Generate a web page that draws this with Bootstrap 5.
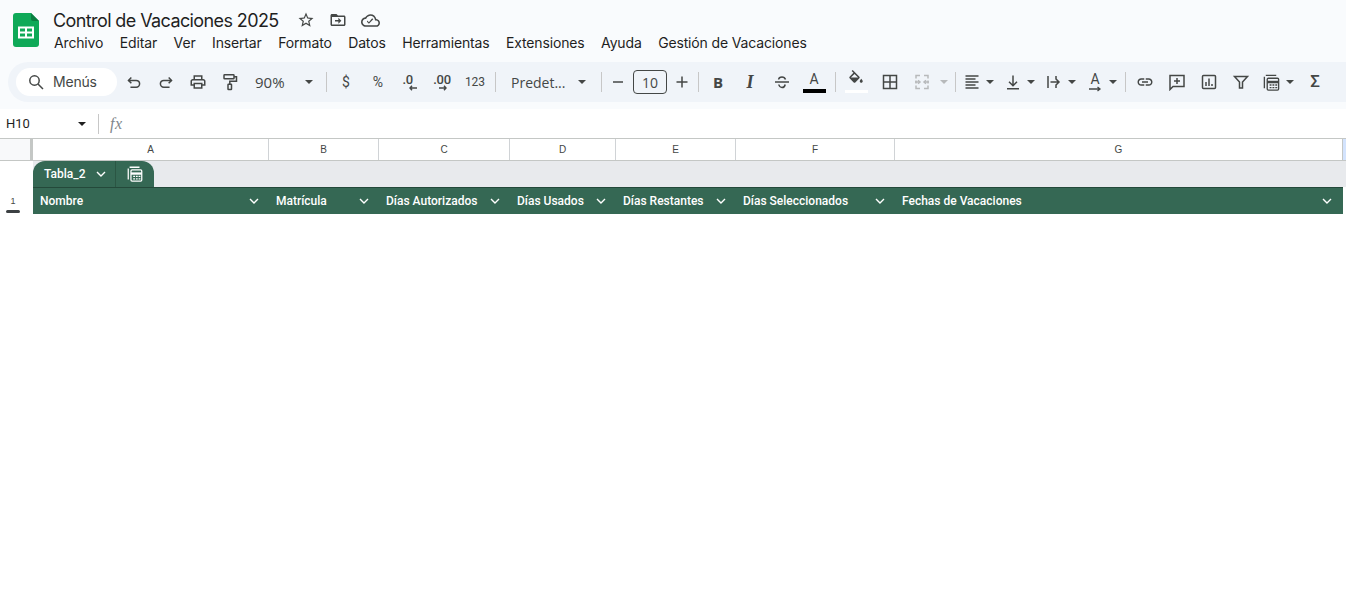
<!DOCTYPE html>
<html lang="es">
<head>
<meta charset="utf-8">
<title>Control de Vacaciones 2025</title>
<link href="https://cdn.jsdelivr.net/npm/bootstrap@5.3.0/dist/css/bootstrap.min.css" rel="stylesheet">
<style>
html,body{height:100%;margin:0;overflow:hidden;background:#fff;}
body{font-family:"Open Sans","Liberation Sans",sans-serif;color:#444746;}
svg{display:block;flex:none;}
.topband{background:#f9fbfd;height:109px;}
.titlebar{height:62px;padding:0 0 0 13px;}
.sheetlogo{width:26px;height:34px;margin-top:13px;margin-right:14px;}
.doc-title{font-size:18px;line-height:24px;color:#1f1f1f;margin-top:9px;font-family:Inter,sans-serif;letter-spacing:-.6px;white-space:nowrap;width:237px;}
.title-ico{width:32px;height:20px;margin-top:11px;color:#444746;}
.menu-row{font-size:14px;line-height:20px;color:#1f1f1f;margin-left:1px;gap:16.5px;font-family:Inter,sans-serif;letter-spacing:-.15px;white-space:nowrap;}
.tools{height:40px;margin-left:8px;padding-left:8px;background:#f0f4f9;border-radius:20px 0 0 20px;color:#444746;}
.searchpill{width:101px;height:28px;background:#fff;border-radius:14px;padding-left:12px;font-size:14px;font-family:Inter,sans-serif;letter-spacing:-.2px;color:#444746;gap:9px;margin-right:1px;}
.searchpill span{padding-bottom:2px;}
.tb{height:32px;flex:none;display:flex;align-items:center;justify-content:center;font-family:Roboto,sans-serif;color:#444746;}
.w32{width:32px;}.w30{width:30px;}.w26{width:26px;}.w24{width:24px;}.w12{width:12px;}
.gl1{margin-left:1px;}.gl2{margin-left:2px;}.gl3{margin-left:3px;}.gl5{margin-left:5px;}.gl6{margin-left:6px;}.gl9{margin-left:9px;}
.gr3{margin-right:3px;}
.caret-dn{width:0;height:0;border-left:4px solid transparent;border-right:4px solid transparent;border-top:4px solid currentColor;}
.vsep{width:1px;height:20px;background:#c7c7c7;flex:none;}
.zoomtxt{width:72px;padding-left:9px;padding-right:5px;justify-content:space-between;font-size:15px;font-family:"Open Sans",sans-serif;}
.predet{width:92px;padding-left:11px;padding-right:6px;justify-content:space-between;font-size:14px;font-family:"Open Sans",sans-serif;}
.sizebox{width:34px;height:24px;border:1px solid #444746;border-radius:4px;font-size:14px;font-family:"Open Sans",sans-serif;}
.t14{font-size:14px;}.t12{font-size:12px;}.t17{font-size:17px;}
.dec{font-size:13px;font-weight:500;line-height:12px;letter-spacing:-.3px;flex-direction:column;}
.dec svg{margin-top:-1px;}
.decl span{margin-right:4px;}.decl svg{margin-left:6px;}
.txb{font-weight:700;font-size:15px;font-family:"Open Sans",sans-serif;}
.txi{font-style:italic;font-weight:700;font-size:18px;font-family:"Liberation Serif",serif;}
.colorbtn{flex-direction:column;font-size:14px;line-height:14px;font-family:Roboto,sans-serif;}
.colorbar{width:23px;height:4px;background:#000;margin-top:3px;}
.fillbar{width:23px;height:3px;background:#fff;margin-top:2px;}
.tipped{margin-top:-2px;}
.off{color:#b7b9bb;}
.fbar{height:29px;background:#fff;font-size:13px;color:#1f1f1f;}
.namebox{width:98px;padding:0 12px 0 6px;font-family:Roboto,sans-serif;}
.fxlbl{font-family:"Liberation Serif",serif;font-style:italic;color:#80868b;font-size:16px;margin-left:11px;letter-spacing:.5px;}
.gridhead{display:grid;grid-template-columns:33px 236px 110px 131px 106px 120px 159px 448px 3px;height:23px;border-top:1px solid #c4c7c5;border-bottom:1px solid #c4c7c5;font-family:"Liberation Sans",sans-serif;font-size:10px;color:#444746;background:#fff;}
.gridhead>div{display:flex;align-items:center;justify-content:center;border-right:1px solid #d0d3d6;}
.gridhead>.corner{background:#f8f9fa;border-right:3px solid #c4c7c5;}
.gridhead>.sel{background:#d3e3fd;border:0;}
.gridhead>.lastc{border-right:1px solid #c4c7c5;}
.tabrow{height:26px;display:flex;background:#e8eaed;}
.rowgut{width:33px;background:#fff;flex:none;}
.tabshape{width:121px;background:#356854;border-radius:12px 12px 0 0;color:#fff;display:flex;align-items:center;font-family:Roboto,sans-serif;font-weight:500;font-size:12px;}
.tabname{width:83px;display:flex;align-items:center;justify-content:space-between;padding:0 8px 0 11px;border-right:1px solid #2b5644;height:100%;}
.tabico{flex:1;display:flex;justify-content:center;}
.dataline{display:grid;grid-template-columns:33px 236px 110px 131px 106px 120px 159px 448px;height:27px;font-family:Roboto,sans-serif;font-weight:500;font-size:12px;color:#fff;}
.rowno{background:#fff;color:#444746;font-size:9px;font-family:"Liberation Sans",sans-serif;font-weight:400;display:flex;flex-direction:column;align-items:center;justify-content:space-between;padding:9px 7px 1px 0;line-height:10px;}
.rowhandle{width:14px;height:3px;background:#3c4043;border-radius:2px;}
.hcell{background:#356854;border-top:1px solid #24493a;display:flex;align-items:center;justify-content:space-between;padding:0 9px 0 7px;white-space:nowrap;}
.hcell:last-child{padding-right:10px;}
</style>
</head>
<body>
<svg width="0" height="0" class="d-none"><defs>
<symbol id="chev" viewBox="0 0 12 12"><path d="M2 4l4 4 4-4" fill="none" stroke="currentColor" stroke-width="1.4"/></symbol>
<symbol id="tblico" viewBox="0 0 20 20"><path d="M4 2.500h11M2.500 4v12" fill="none" stroke="currentColor" stroke-width="1.400"/><rect x="5.500" y="5.500" width="12" height="12.500" rx="1.200" fill="none" stroke="currentColor" stroke-width="1.400"/><path d="M5.500 9.500h12" stroke="currentColor" stroke-width="2.600"/><path d="M8 12.600h2M11 12.600h2M14 12.600h2M8 15.400h2M11 15.400h2M14 15.400h2" stroke="currentColor" stroke-width="1.500"/></symbol>
</defs></svg>

<header class="topband">
  <div class="titlebar d-flex">
    <svg class="sheetlogo" viewBox="0 0 26 34"><path d="M3 0h15l8 8v23a3 3 0 0 1-3 3H3a3 3 0 0 1-3-3V3a3 3 0 0 1 3-3z" fill="#0fa958"/><path d="M18 0l8 8h-6a2 2 0 0 1-2-2z" fill="#0a7d40"/><path d="M6 14.500h14v10H6z" fill="none" stroke="#fff" stroke-width="2"/><path d="M6 19.500h14M13 14.500v10" stroke="#fff" stroke-width="2"/></svg>
    <div>
      <div class="d-flex">
        <div class="doc-title">Control de Vacaciones 2025</div>
        <div class="title-ico d-flex justify-content-center"><svg width="18" height="18" viewBox="0 0 24 24" fill="currentColor"><path d="M22 9.240l-7.190-.62L12 2 9.190 8.630 2 9.240l5.460 4.730L5.820 21 12 17.270 18.180 21l-1.630-7.030L22 9.240zM12 15.400l-3.760 2.270 1-4.280-3.320-2.880 4.380-.38L12 6.100l1.710 4.040 4.380.38-3.320 2.880 1 4.280L12 15.400z"/></svg></div>
        <div class="title-ico d-flex justify-content-center"><svg width="18" height="18" viewBox="0 0 24 24" fill="currentColor"><path d="M20 6h-8l-2-2H4c-1.100 0-2 .9-2 2v12c0 1.100.9 2 2 2h16c1.100 0 2-.9 2-2V8c0-1.100-.9-2-2-2zm0 12H4V8h16v10z"/><path d="M12.500 9l4 4-4 4v-3H8v-2h4.500z"/></svg></div>
        <div class="title-ico d-flex justify-content-center"><svg width="19" height="19" viewBox="0 0 24 24" fill="currentColor"><path d="M19.350 10.040C18.670 6.590 15.640 4 12 4 9.110 4 6.600 5.640 5.350 8.040 2.340 8.360 0 10.910 0 14c0 3.310 2.690 6 6 6h13c2.760 0 5-2.240 5-5 0-2.640-2.050-4.780-4.650-4.960zM19 18H6c-2.210 0-4-1.790-4-4 0-2.050 1.530-3.760 3.560-3.970l1.070-.11.5-.95C8.080 7.140 9.940 6 12 6c2.620 0 4.880 1.860 5.390 4.430l.3 1.500 1.530.11c1.560.1 2.780 1.410 2.780 2.960 0 1.650-1.350 3-3 3zm-9-3.820l-2.090-2.090L7.500 13.500 10 16l5.510-5.510-1.410-1.410z"/></svg></div>
      </div>
      <nav class="menu-row d-flex">
        <span>Archivo</span><span>Editar</span><span>Ver</span><span>Insertar</span><span>Formato</span><span>Datos</span><span>Herramientas</span><span>Extensiones</span><span>Ayuda</span><span>Gestión de Vacaciones</span>
      </nav>
    </div>
  </div>
  <div class="tools d-flex align-items-center">
    <div class="searchpill d-flex align-items-center"><svg width="16" height="16" viewBox="0 0 16 16" fill="none" stroke="currentColor" stroke-width="1.500"><circle cx="6.500" cy="6.500" r="4.700"/><path d="M10 10l5 5"/></svg><span>Menús</span></div>
    <div class="tb w32"><svg width="16" height="16" viewBox="0 0 18 18" fill="none" stroke="currentColor" stroke-width="1.700"><path d="M6 4L2.800 7.200 6 10.400"/><path d="M3 7.200h8.500a3.800 3.800 0 0 1 0 7.600H5"/></svg></div>
    <div class="tb w32"><svg width="16" height="16" viewBox="0 0 18 18" fill="none" stroke="currentColor" stroke-width="1.700"><path d="M12 4l3.200 3.200L12 10.400"/><path d="M15 7.200H6.500a3.800 3.800 0 0 0 0 7.600H13"/></svg></div>
    <div class="tb w32"><svg width="18" height="18" viewBox="0 0 24 24" fill="currentColor"><path d="M19 8h-1V3H6v5H5c-1.660 0-3 1.340-3 3v6h4v4h12v-4h4v-6c0-1.660-1.340-3-3-3zM8 5h8v3H8V5zm8 14H8v-4h8v4zm4-4h-2v-2H6v2H4v-4c0-.55.45-1 1-1h14c.55 0 1 .45 1 1v4z"/></svg></div>
    <div class="tb w32"><svg width="18" height="18" viewBox="0 0 18 18" fill="none" stroke="currentColor" stroke-width="1.500"><rect x="3" y="1.800" width="10" height="4" rx=".6"/><path d="M13 3.800h2.500v4.500H8.800v3"/><rect x="7" y="11.300" width="3.500" height="5.200" rx=".5"/></svg></div>
    <div class="tb zoomtxt"><span>90%</span><span class="caret-dn"></span></div>
    <span class="vsep ms-2 gr3"></span>
    <div class="tb w32 t14">$</div>
    <div class="tb w32 t14">%</div>
    <div class="tb w32"><span class="dec decl d-flex"><span>.0</span><svg width="9" height="6" viewBox="0 0 9 6" fill="none" stroke="currentColor" stroke-width="1.400"><path d="M3 .8L1 3l2 2.200M1.500 3H8"/></svg></span></div>
    <div class="tb w32"><span class="dec d-flex align-items-center"><span>.00</span><svg width="9" height="6" viewBox="0 0 9 6" fill="none" stroke="currentColor" stroke-width="1.400"><path d="M6 .8L8 3 6 5.200M1 3h6.500"/></svg></span></div>
    <div class="tb w32 t12 gl1">123</div>
    <span class="vsep ms-1 me-1"></span>
    <div class="tb predet"><span>Predet...</span><span class="caret-dn"></span></div>
    <span class="vsep gl9"></span>
    <div class="tb w30 gl1"><svg width="12" height="12" viewBox="0 0 12 12" stroke="currentColor" stroke-width="1.500"><path d="M1 6h10"/></svg></div>
    <div class="tb sizebox">10</div>
    <div class="tb w30"><svg width="12" height="12" viewBox="0 0 12 12" stroke="currentColor" stroke-width="1.500"><path d="M.5 6h11M6 .5v11"/></svg></div>
    <span class="vsep gl1"></span>
    <div class="tb w32 gl3 txb">B</div>
    <div class="tb w32 txi">I</div>
    <div class="tb w32"><svg width="18" height="18" viewBox="0 0 18 18" fill="none" stroke="currentColor" stroke-width="1.500"><path d="M2 9h14M12.500 6.500C12 5 10.500 4 9 4S5.800 5 5.600 6.500M5.800 11.500C6 13 7.500 14.500 9 14.500s2.900-1.300 3.200-3"/></svg></div>
    <div class="tb w32 colorbtn"><span>A</span><span class="colorbar"></span></div>
    <span class="vsep gl5"></span>
    <div class="tb w32 ms-1 colorbtn tipped"><svg width="18" height="18" viewBox="0 0 24 24" fill="currentColor"><path d="M16.560 8.940L7.620 0 6.210 1.410l2.380 2.380-5.150 5.150c-.59.59-.59 1.540 0 2.120l5.500 5.500c.29.29.68.44 1.060.44s.77-.15 1.060-.44l5.500-5.500c.59-.58.59-1.530 0-2.120zM5.210 10L10 5.210 14.790 10H5.210zM19 11.500s-2 2.170-2 3.500c0 1.100.9 2 2 2s2-.9 2-2c0-1.330-2-3.500-2-3.500z"/></svg><span class="fillbar"></span></div>
    <div class="tb w32 gl2"><svg width="18" height="18" viewBox="0 0 18 18" fill="none" stroke="currentColor" stroke-width="1.500"><rect x="2.500" y="2.500" width="13" height="13"/><path d="M9 2.500v13M2.500 9h13"/></svg></div>
    <div class="tb w32 off"><svg width="18" height="18" viewBox="0 0 18 18" fill="none" stroke="currentColor" stroke-width="1.500"><path d="M7 2.500H3v3M3 12.500v3h4M11 2.500h4v3M15 12.500v3h-4M3 7.500v3M15 7.500v3M2 9h3.500M5 7.200L7 9l-2 1.800M16 9h-3.500M13 7.200L11 9l2 1.800"/></svg></div>
    <div class="tb w12 off"><span class="caret-dn"></span></div>
    <span class="vsep gl5"></span>
    <div class="tb w24 ms-1"><svg width="18" height="18" viewBox="0 0 18 18" stroke="currentColor" stroke-width="1.500"><path d="M2.500 3h13M2.500 6h10M2.500 9h13M2.500 12h10M2.500 15h13"/></svg></div>
    <div class="tb w12"><span class="caret-dn"></span></div>
    <div class="tb w24 gl5"><svg width="18" height="18" viewBox="0 0 18 18" fill="none" stroke="currentColor" stroke-width="1.500"><path d="M9 2.500v10M5 8.800l4 4 4-4M3 15.700h12"/></svg></div>
    <div class="tb w12"><span class="caret-dn"></span></div>
    <div class="tb w24 gl5"><svg width="18" height="18" viewBox="0 0 18 18" fill="none" stroke="currentColor" stroke-width="1.500"><path d="M3 3v12M11 3v3.500M11 11.500V15M5.500 9H14M11 6l3 3-3 3"/></svg></div>
    <div class="tb w12"><span class="caret-dn"></span></div>
    <div class="tb w24 gl5"><span class="colorbtn d-flex align-items-center"><span>A</span><svg width="14" height="6" viewBox="0 0 14 6" fill="none" stroke="currentColor" stroke-width="1.300"><path d="M1 3h11M9.500 1L12 3 9.500 5"/></svg></span></div>
    <div class="tb w12"><span class="caret-dn"></span></div>
    <span class="vsep gl6"></span>
    <div class="tb w32 gl3"><svg width="18" height="18" viewBox="0 0 24 24" fill="currentColor"><path d="M3.900 12c0-1.710 1.390-3.100 3.100-3.100h4V7H7c-2.760 0-5 2.240-5 5s2.240 5 5 5h4v-1.900H7c-1.710 0-3.100-1.390-3.100-3.100zM8 13h8v-2H8v2zm9-6h-4v1.900h4c1.710 0 3.100 1.390 3.100 3.100s-1.390 3.100-3.100 3.100h-4V17h4c2.760 0 5-2.240 5-5s-2.240-5-5-5z"/></svg></div>
    <div class="tb w32"><svg width="18" height="18" viewBox="0 0 18 18" fill="none" stroke="currentColor" stroke-width="1.500"><path d="M2 2.500h14v11H5l-3 3zM9 5v6M6 8h6"/></svg></div>
    <div class="tb w32"><svg width="18" height="18" viewBox="0 0 18 18" fill="none" stroke="currentColor" stroke-width="1.500"><rect x="2.500" y="2.500" width="13" height="13" rx="1"/><path d="M6 13V9M9 13V5.500M12 13v-2"/></svg></div>
    <div class="tb w32"><svg width="18" height="18" viewBox="0 0 18 18" fill="none" stroke="currentColor" stroke-width="1.500"><path d="M2.500 3.500h13L10.500 9v6h-3V9z"/></svg></div>
    <div class="tb w26 gl1"><svg width="19" height="19"><use href="#tblico"/></svg></div>
    <div class="tb w12"><span class="caret-dn"></span></div>
    <div class="tb w32 gl3 t17 fw-medium">Σ</div>
  </div>
</header>

<div class="fbar d-flex align-items-center">
  <div class="namebox d-flex justify-content-between align-items-center"><span>H10</span><span class="caret-dn"></span></div>
  <span class="vsep"></span>
  <span class="fxlbl">fx</span>
</div>

<div class="gridhead">
  <div class="corner"></div><div>A</div><div>B</div><div>C</div><div>D</div><div>E</div><div>F</div><div class="lastc">G</div><div class="sel"></div>
</div>
<div class="tabrow">
  <div class="rowgut"></div>
  <div class="tabshape">
    <div class="tabname"><span>Tabla_2</span><svg width="12" height="12"><use href="#chev"/></svg></div>
    <div class="tabico"><svg width="18" height="18"><use href="#tblico"/></svg></div>
  </div>
</div>
<div class="dataline">
  <div class="rowno"><span>1</span><span class="rowhandle"></span></div>
  <div class="hcell"><span>Nombre</span><svg width="12" height="12"><use href="#chev"/></svg></div>
  <div class="hcell"><span>Matrícula</span><svg width="12" height="12"><use href="#chev"/></svg></div>
  <div class="hcell"><span>Días Autorizados</span><svg width="12" height="12"><use href="#chev"/></svg></div>
  <div class="hcell"><span>Días Usados</span><svg width="12" height="12"><use href="#chev"/></svg></div>
  <div class="hcell"><span>Días Restantes</span><svg width="12" height="12"><use href="#chev"/></svg></div>
  <div class="hcell"><span>Días Seleccionados</span><svg width="12" height="12"><use href="#chev"/></svg></div>
  <div class="hcell"><span>Fechas de Vacaciones</span><svg width="12" height="12"><use href="#chev"/></svg></div>
</div>
<script src="https://cdn.jsdelivr.net/npm/bootstrap@5.3.0/dist/js/bootstrap.bundle.min.js"></script>
</body>
</html>
